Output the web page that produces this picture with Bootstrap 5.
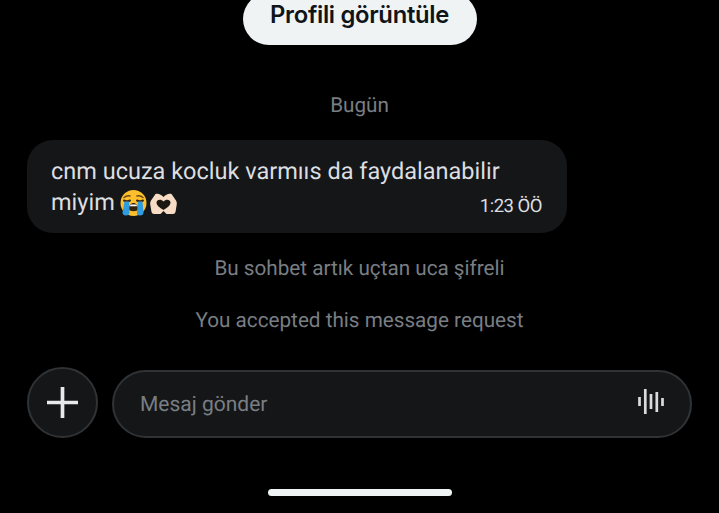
<!DOCTYPE html>
<html lang="tr">
<head>
<meta charset="utf-8">
<title>Mesaj</title>
<link href="https://cdn.jsdelivr.net/npm/bootstrap@5.3.0/dist/css/bootstrap.min.css" rel="stylesheet">
<style>
html,body{height:513px;overflow:hidden;background:#000;}
body{font-family:Roboto,"Liberation Sans",sans-serif;width:719px;text-rendering:geometricPrecision;}
.chat-screen{height:513px;padding:0 27px;}
.profile-btn{width:234px;height:52px;margin-top:-7px;border-radius:26px;background:#eff3f4;color:#0f1419;font-family:Inter,Roboto,sans-serif;font-weight:600;font-size:23.800px;line-height:30px;letter-spacing:-.3px;border:0;padding:0 0 8px;}
.day-label{margin-top:49px;color:#797e83;font-size:20.700px;line-height:24px;text-align:center;}
.bubble{margin-top:22px;width:540px;height:93px;border-radius:26px;background:#151618;color:#dcdee0;font-size:23.500px;line-height:31px;padding:15.500px 24px 0;position:relative;}
.bubble-time{position:absolute;right:25px;bottom:15px;font-size:18.500px;line-height:24px;letter-spacing:-.5px;}
.emoji-cry{display:inline-block;vertical-align:-6px;margin-left:-1px;}
.emoji-heart{display:inline-block;vertical-align:-4px;margin-left:3px;}
.sys-note{color:#797e83;font-size:20.700px;line-height:24px;text-align:center;}
.note-first{margin-top:24px;}
.note-second{margin-top:28px;}
.composer{margin-top:34px;gap:14px;}
.plus-btn{width:71px;height:71px;border-radius:50%;background:#151618;border:2px solid #2f3336;flex:none;}
.msg-field{width:580px;height:68px;border-radius:34px;background:#151618;border:2px solid #2f3336;padding:0 24px 0 26px;color:#797e83;font-size:21px;}
.field-hint{padding-top:4px;}
.voice-ic{margin-bottom:7px;}
.home-bar{width:184px;height:7px;border-radius:4px;background:#eff3f4;margin:51px auto 0;}
</style>
</head>
<body>
<main class="chat-screen d-flex flex-column">
  <div class="d-flex justify-content-center">
    <button class="btn profile-btn" type="button">Profili görüntüle</button>
  </div>
  <div class="day-label">Bugün</div>
  <div class="bubble">
    <div>cnm ucuza kocluk varmııs da faydalanabilir<br>miyim
      <svg class="emoji-cry" width="27" height="26" viewBox="0 0 27 26" aria-hidden="true">
        <circle cx="13.500" cy="13" r="13" fill="#fdbf2d"/>
        <path d="M4 7.500q3-2.500 6-1.500M17 6q3-1 6 1.500" fill="none" stroke="#6b4a14" stroke-width="1.500" stroke-linecap="round"/>
        <path d="M4 10.500q3 1.500 6 0M17 10.500q3 1.500 6 0" fill="none" stroke="#3b2a10" stroke-width="2" stroke-linecap="round"/>
        <path d="M9 19c0-8 9-8 9 0 0 3-9 3-9 0z" fill="#33230e"/>
        <path d="M10.500 14.500h6l.5 1.800h-7z" fill="#fff"/>
        <path d="M4.500 11.500h4.500l.5 11q0 3-3.500 3t-3.500-3zM18 11.500h4.500l1 11q0 3-3.500 3t-3-3z" fill="#2f9be0"/>
      </svg><svg class="emoji-heart" width="27" height="21" viewBox="0 0 27 21" aria-hidden="true">
        <path d="M13.500 4C11.500 1.500 8 0 5.500 1L1 7.500C0 9 0 11 .5 13l1 6q.5 2 2.500 2h6.500l3-3 3 3H23q2 0 2.500-2l1-6c.5-2 .5-4-.5-5.500L21.500 1C19 0 15.500 1.500 13.500 4z" fill="#f6dcc4"/>
        <path d="M13.500 17C9.500 14.500 6.500 12.500 6.500 9.500 6.500 6.500 11 5.500 13.500 8.500 16 5.500 20.500 6.500 20.500 9.500 20.500 12.500 17.500 14.500 13.500 17z" fill="#1d1712"/>
      </svg>
    </div>
    <span class="bubble-time">1:23 ÖÖ</span>
  </div>
  <div class="sys-note note-first">Bu sohbet artık uçtan uca şifreli</div>
  <div class="sys-note note-second">You accepted this message request</div>
  <div class="composer d-flex align-items-end">
    <div class="plus-btn d-flex align-items-center justify-content-center">
      <svg width="33" height="33" viewBox="0 0 33 33" aria-hidden="true"><path d="M16.500 1v31M1 16.500h31" stroke="#e7e9ea" stroke-width="3.700" fill="none"/></svg>
    </div>
    <div class="msg-field d-flex align-items-center justify-content-between">
      <span class="field-hint">Mesaj gönder</span>
      <svg class="voice-ic" width="28" height="26" viewBox="0 0 28 26" aria-hidden="true"><path d="M1.500 9v9M7.300 1v25M13 6v15M18.800 4v20M24.500 10v8" stroke="#d8dadb" stroke-width="2.700" fill="none"/></svg>
    </div>
  </div>
  <div class="home-bar"></div>
</main>
<script src="https://cdn.jsdelivr.net/npm/bootstrap@5.3.0/dist/js/bootstrap.bundle.min.js"></script>
</body>
</html>
